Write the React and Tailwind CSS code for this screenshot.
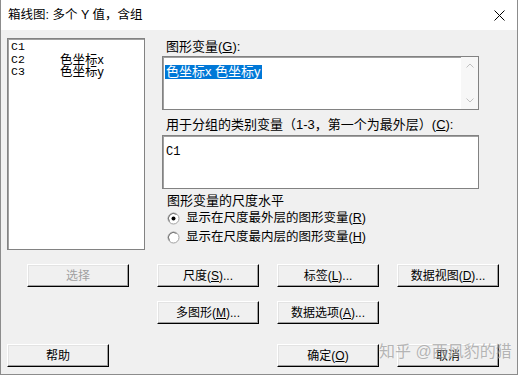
import React from 'react';

const font = { fontFamily: '"Liberation Sans", "Noto Sans CJK SC", sans-serif' };

const Btn = ({ children, disabled, className = '' }) => (
  <div
    className={`w-[102px] h-[23px] flex items-center justify-center bg-[#f0f0f0] border border-t-white border-l-white border-b-black border-r-black shadow-[inset_-1px_-1px_0_#a0a0a0,inset_1px_1px_0_#e3e3e3] text-[12px] ${disabled ? 'text-[#a0a0a0]' : 'text-black'} ${className}`}
  >
    {children}
  </div>
);

const U = ({ children }) => <span className="underline underline-offset-1">{children}</span>;

const Radio = ({ checked, children }) => (
  <div className="flex items-center h-[19px]">
    <svg width="13" height="13" viewBox="0 0 13 13" className="ml-[1px] mr-[6px]">
      <circle cx="6.5" cy="6.5" r="5.5" fill="white" stroke="#a0a0a0" strokeWidth="1" />
      <path d="M2.5 9.5 A5 5 0 0 1 9.5 2.5" fill="none" stroke="#707070" strokeWidth="1" />
      {checked && <circle cx="6.5" cy="6.5" r="2" fill="black" />}
    </svg>
    <span className="text-[12.5px]">{children}</span>
  </div>
);

export default function App() {
  return (
    <div
      className="w-[518px] h-[375px] bg-[#f0f0f0] border-x border-b border-[#8c8c8c] flex flex-col relative overflow-hidden text-black"
      style={font}
    >
      {/* title bar */}
      <div className="h-[30px] bg-white flex items-center justify-between pl-[7px] pr-[12px] shrink-0">
        <span className="text-[12.5px]">箱线图: 多个 Y 值，含组</span>
        <svg width="11" height="11" viewBox="0 0 11 11">
          <path d="M0.5 0.5 L10.5 10.5 M10.5 0.5 L0.5 10.5" stroke="black" strokeWidth="1" />
        </svg>
      </div>

      <div className="flex flex-col px-[6px] pt-[8px]">
        {/* upper part */}
        <div className="flex">
          <div className="w-[138px] h-[212px] bg-white border border-[#828282] shadow-[inset_1px_1px_0_#a0a0a0] pt-[2px] pl-[3px]">
            {[['C1', ''], ['C2', '色坐标x'], ['C3', '色坐标y']].map(([c, n]) => (
              <div key={c} className="flex h-[12.5px] items-center">
                <span className="w-[49px] text-[11.5px] leading-[12px]" style={{ fontFamily: '"Liberation Mono", monospace' }}>{c}</span>
                <span className="text-[12.5px] leading-[12px]">{n}</span>
              </div>
            ))}
          </div>

          <div className="ml-[17px] w-[317px] flex flex-col">
            <div className="h-[12px] mt-[3px] flex items-center pl-[4px] text-[13px]">
              图形变量(<U>G</U>):
            </div>
            <div className="mt-[3px] h-[54px] bg-white border border-[#828282] shadow-[inset_1px_1px_0_#a0a0a0] flex">
              <div className="flex-1 pt-[2px] pl-[2px]">
                <span className="bg-[#0078d7] text-white text-[13px] leading-[14px] px-[1px] inline-block">色坐标x 色坐标y</span>
              </div>
              <div className="w-[17px] flex flex-col items-center justify-between py-[6px] bg-[#f7f7f7]">
                <svg width="8" height="5" viewBox="0 0 8 5"><path d="M0.5 4.5 L4 1 L7.5 4.5" fill="none" stroke="#c0c0c0" /></svg>
                <svg width="8" height="5" viewBox="0 0 8 5"><path d="M0.5 0.5 L4 4 L7.5 0.5" fill="none" stroke="#c0c0c0" /></svg>
              </div>
            </div>

            <div className="h-[12px] mt-[9px] flex items-center pl-[4px] text-[13px] whitespace-nowrap">
              用于分组的类别变量（1-3，第一个为最外层）(<U>C</U>):
            </div>
            <div className="mt-[4px] h-[54px] bg-white border border-[#828282] shadow-[inset_1px_1px_0_#a0a0a0] pt-[2px] pl-[3px]">
              <span className="text-[12px]" style={{ fontFamily: '"Liberation Mono", monospace' }}>C1</span>
            </div>
          </div>
        </div>

        {/* scale level */}
        <div className="ml-[156px] -mt-[55px] flex flex-col">
          <div className="h-[12px] flex items-center pl-[4px] text-[13px]">图形变量的尺度水平</div>
          <div className="mt-[2px] pl-[3px]">
            <Radio checked>显示在尺度最外层的图形变量(<U>R</U>)</Radio>
            <Radio>显示在尺度最内层的图形变量(<U>H</U>)</Radio>
          </div>
        </div>

        {/* button rows */}
        <div className="flex mt-[17px]">
          <Btn disabled className="ml-[20px]">选择</Btn>
          <Btn className="ml-[28px]">尺度(<U>S</U>)...</Btn>
          <Btn className="ml-[18px]">标签(<U>L</U>)...</Btn>
          <Btn className="ml-[18px]">数据视图(<U>D</U>)...</Btn>
        </div>
        <div className="flex mt-[14px]">
          <Btn className="ml-[150px]">多图形(<U>M</U>)...</Btn>
          <Btn className="ml-[18px]">数据选项(<U>A</U>)...</Btn>
        </div>
        <div className="flex mt-[20px]">
          <Btn>帮助</Btn>
          <Btn className="ml-[168px]">确定(<U>O</U>)</Btn>
          <Btn className="ml-[18px]">取消</Btn>
        </div>
      </div>

      {/* watermark */}
      <div className="absolute left-[378px] top-[342px] text-[16px] leading-[20px] text-[#9c9c9c] opacity-70 [text-shadow:0_0_2px_white] whitespace-nowrap pointer-events-none">
        知乎 @西风豹的猎
      </div>
    </div>
  );
}
